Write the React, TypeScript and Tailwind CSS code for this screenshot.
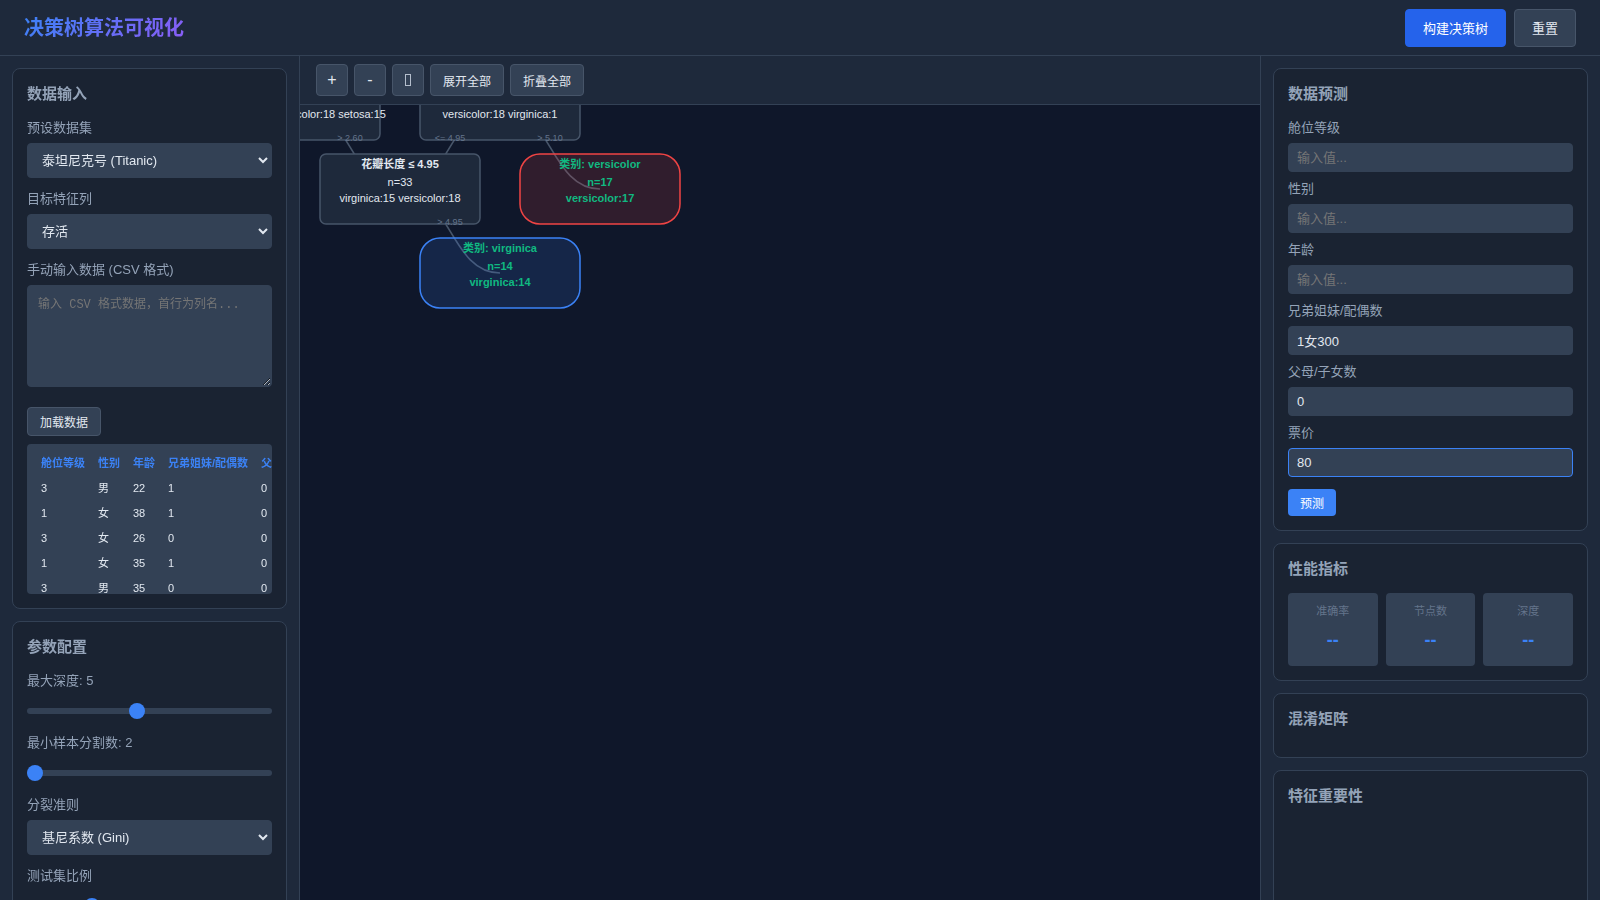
import { useState } from 'react'
import type { ReactNode } from 'react'

interface TreeNode {
  x: number
  y: number
  lines: string[]
  kind: 'split' | 'red' | 'blue'
}

interface TreeLink {
  from: [number, number]
  to: [number, number]
  label: string
}

const NODE_W = 160
const NODE_H = 70

// x / y are the centre of each node
const nodes: TreeNode[] = [
  { x: 0, y: 0, lines: ['', '', 'virginica:15 versicolor:18 setosa:15'], kind: 'split' },
  { x: 200, y: 0, lines: ['', '', 'versicolor:18 virginica:1'], kind: 'split' },
  { x: 100, y: 84, lines: ['花瓣长度 ≤ 4.95', 'n=33', 'virginica:15 versicolor:18'], kind: 'split' },
  { x: 300, y: 84, lines: ['类别: versicolor', 'n=17', 'versicolor:17'], kind: 'red' },
  { x: 200, y: 168, lines: ['类别: virginica', 'n=14', 'virginica:14'], kind: 'blue' },
]

const links: TreeLink[] = [
  { from: [0, 0], to: [100, 84], label: '> 2.60' },
  { from: [200, 0], to: [100, 84], label: '<= 4.95' },
  { from: [200, 0], to: [300, 84], label: '> 5.10' },
  { from: [100, 84], to: [200, 168], label: '> 4.95' },
]

const nodeClass = {
  split: 'fill-[#1e293b] stroke-[#475569]',
  red: 'fill-[#ef4444]/15 stroke-[#ef4444]',
  blue: 'fill-[#3b82f6]/15 stroke-[#3b82f6]',
}

const columns = ['舱位等级', '性别', '年龄', '兄弟姐妹/配偶数', '父母/子女数', '票价', '存活']

const rows = [
  ['3', '男', '22', '1', '0', '7.25', '否'],
  ['1', '女', '38', '1', '0', '71.28', '是'],
  ['3', '女', '26', '0', '0', '7.92', '是'],
  ['1', '女', '35', '1', '0', '53.1', '是'],
  ['3', '男', '35', '0', '0', '8.05', '否'],
]

const fields = [
  { id: 'pclass', label: '舱位等级', value: '' },
  { id: 'sex', label: '性别', value: '' },
  { id: 'age', label: '年龄', value: '' },
  { id: 'sibsp', label: '兄弟姐妹/配偶数', value: '1女300' },
  { id: 'parch', label: '父母/子女数', value: '0' },
  { id: 'fare', label: '票价', value: '80', active: true },
]

const metrics = ['准确率', '节点数', '深度']

const selectClass =
  'w-full h-[35px] px-2.5 rounded bg-[#334155] border border-[#334155] text-[13px] text-[#e2e8f0]'
const rangeClass =
  'block w-full h-1.5 mt-[17px] mb-2 appearance-none rounded-[3px] bg-[#334155] [&::-webkit-slider-thumb]:appearance-none [&::-webkit-slider-thumb]:size-4 [&::-webkit-slider-thumb]:rounded-full [&::-webkit-slider-thumb]:bg-[#3b82f6]'
const greyButton =
  'rounded bg-[#334155] border border-[#475569] leading-[normal] text-[#e2e8f0] hover:bg-[#475569]'

function Card({ title, children }: { title: string; children?: ReactNode }) {
  return (
    <section className="rounded-lg border border-[#334155] bg-[#1a2332] p-3.5">
      <h2 className="mb-3.5 text-[15px] leading-[21px] font-semibold text-[#94a3b8]">{title}</h2>
      {children}
    </section>
  )
}

function Label({ htmlFor, children }: { htmlFor: string; children: ReactNode }) {
  return (
    <label htmlFor={htmlFor} className="block text-[13px] leading-5 text-[#94a3b8]">
      {children}
    </label>
  )
}

function TreeCanvas() {
  return (
    <svg className="block w-full h-full" role="img" aria-label="决策树">
      {links.map(({ from, to }, i) => {
        const mid = (from[0] + to[0]) / 2
        return (
          <path
            key={i}
            d={`M${from[0]},${from[1]}C${mid},${from[1]} ${mid},${to[1]} ${to[0]},${to[1]}`}
            className="fill-none stroke-[#475569]"
            strokeWidth="1.5"
          />
        )
      })}
      {nodes.map((node, i) => (
        <g key={i} transform={`translate(${node.x},${node.y})`} textAnchor="middle">
          <rect
            x={-NODE_W / 2}
            y={-NODE_H / 2}
            width={NODE_W}
            height={NODE_H}
            rx={node.kind === 'split' ? 6 : 20}
            strokeWidth="1.5"
            className={nodeClass[node.kind]}
          />
          {node.lines.map((line, n) => (
            <text
              key={n}
              y={[-21, -3, 13][n]}
              className={
                node.kind !== 'split'
                  ? 'text-[11px] font-semibold fill-[#10b981]'
                  : n === 0
                    ? 'text-[11px] font-semibold fill-[#e2e8f0]'
                    : 'text-[11px] fill-[#e2e8f0]'
              }
            >
              {line}
            </text>
          ))}
        </g>
      ))}
      {links.map(({ from, to, label }, i) => (
        <text
          key={i}
          x={(from[0] + to[0]) / 2}
          y={(from[1] + to[1]) / 2 - 6}
          textAnchor="middle"
          className="text-[9px] fill-[#64748b]"
        >
          {label}
        </text>
      ))}
    </svg>
  )
}

export default function App() {
  const [depth, setDepth] = useState(5)
  const [minSplit, setMinSplit] = useState(2)

  return (
    <div className="flex h-screen flex-col overflow-hidden bg-[#0f172a] text-[#e2e8f0] font-['Liberation_Sans','Noto_Sans_CJK_SC',sans-serif]">
      {/* Header */}
      <header className="flex h-14 shrink-0 items-center justify-between border-b border-[#334155] bg-[#1e293b] px-6">
        <h1 className="bg-[linear-gradient(135deg,#3b82f6,#8b5cf6)] bg-clip-text text-xl leading-[30px] font-semibold text-transparent">
          决策树算法可视化
        </h1>
        <div className="flex gap-2">
          <button className="h-[38px] rounded border border-[#2563eb] bg-[#2563eb] px-[17px] text-[13px] leading-[normal] text-white">
            构建决策树
          </button>
          <button className={`h-[38px] px-[17px] text-[13px] ${greyButton}`}>重置</button>
        </div>
      </header>

      <div className="flex min-h-0 flex-1">
        {/* Left panel */}
        <aside className="w-[300px] shrink-0 space-y-3 overflow-y-auto border-r border-[#334155] bg-[#1e293b] p-3 [scrollbar-width:none]">
          <Card title="数据输入">
            <div className="flex flex-col gap-[11px]">
              <div className="flex flex-col gap-[5px]">
                <Label htmlFor="dataset">预设数据集</Label>
                <select id="dataset" className={selectClass}>
                  <option>泰坦尼克号 (Titanic)</option>
                  <option>鸢尾花 (Iris)</option>
                </select>
              </div>
              <div className="flex flex-col gap-[5px]">
                <Label htmlFor="target">目标特征列</Label>
                <select id="target" className={selectClass}>
                  <option>存活</option>
                </select>
              </div>
              <div className="flex flex-col gap-[5px]">
                <Label htmlFor="csv">手动输入数据 (CSV 格式)</Label>
                <textarea
                  id="csv"
                  placeholder="输入 CSV 格式数据，首行为列名..."
                  className="h-[102px] resize-y rounded border border-[#334155] bg-[#334155] px-2.5 py-2 font-['Liberation_Mono','Noto_Sans_CJK_SC',monospace] text-xs leading-[normal] placeholder:text-[#757575]"
                />
              </div>
            </div>
            <button className={`mt-5 h-[29px] px-3 text-xs ${greyButton}`}>加载数据</button>
            <div className="mt-2 h-[150px] overflow-auto rounded bg-[#334155] px-2 py-1.5 [scrollbar-width:none]">
              <table className="text-[11px] leading-4 whitespace-nowrap">
                <thead>
                  <tr>
                    {columns.map((col) => (
                      <th key={col} className="h-[25px] pr-[7px] pl-1.5 text-left font-bold text-[#3b82f6]">
                        {col}
                      </th>
                    ))}
                  </tr>
                </thead>
                <tbody>
                  {rows.map((row, i) => (
                    <tr key={i}>
                      {row.map((cell, j) => (
                        <td key={j} className="h-[25px] pr-[7px] pl-1.5">
                          {cell}
                        </td>
                      ))}
                    </tr>
                  ))}
                </tbody>
              </table>
            </div>
          </Card>

          <Card title="参数配置">
            <div className="flex flex-col gap-[11px]">
              <div>
                <Label htmlFor="depth">最大深度: {depth}</Label>
                <input
                  id="depth"
                  type="range"
                  min={1}
                  max={10}
                  value={depth}
                  onChange={(e) => setDepth(Number(e.target.value))}
                  className={rangeClass}
                />
              </div>
              <div>
                <Label htmlFor="min-split">最小样本分割数: {minSplit}</Label>
                <input
                  id="min-split"
                  type="range"
                  min={2}
                  max={20}
                  value={minSplit}
                  onChange={(e) => setMinSplit(Number(e.target.value))}
                  className={rangeClass}
                />
              </div>
              <div className="flex flex-col gap-[5px]">
                <Label htmlFor="criterion">分裂准则</Label>
                <select id="criterion" className={selectClass}>
                  <option>基尼系数 (Gini)</option>
                  <option>信息增益 (Entropy)</option>
                </select>
              </div>
              <div>
                <Label htmlFor="test-size">测试集比例</Label>
                <input
                  id="test-size"
                  type="range"
                  min={10}
                  max={50}
                  defaultValue={20}
                  className={rangeClass}
                />
              </div>
            </div>
          </Card>
        </aside>

        {/* Tree */}
        <main className="flex min-w-0 flex-1 flex-col">
          <div className="flex gap-1.5 border-b border-[#334155] bg-[#1e293b] px-4 py-2">
            <button className={`size-8 text-base ${greyButton}`}>+</button>
            <button className={`size-8 text-base ${greyButton}`}>-</button>
            <button aria-label="适应屏幕" className={`flex size-8 items-center justify-center ${greyButton}`}>
              <svg width="6" height="12" viewBox="0 0 6 12" className="fill-none stroke-[#b4becc]">
                <rect x="0.5" y="0.5" width="5" height="11" />
              </svg>
            </button>
            <button className={`h-8 px-3 text-xs ${greyButton}`}>展开全部</button>
            <button className={`h-8 px-3 text-xs ${greyButton}`}>折叠全部</button>
          </div>
          <div className="min-h-0 flex-1 overflow-hidden">
            <TreeCanvas />
          </div>
        </main>

        {/* Right panel */}
        <aside className="w-[340px] shrink-0 space-y-3 overflow-y-auto border-l border-[#334155] bg-[#1e293b] p-3 [scrollbar-width:none]">
          <Card title="数据预测">
            <div className="flex flex-col gap-[7px]">
              {fields.map((field) => (
                <div key={field.id} className="flex flex-col gap-[5px]">
                  <Label htmlFor={field.id}>{field.label}</Label>
                  <input
                    id={field.id}
                    type="text"
                    placeholder="输入值..."
                    defaultValue={field.value}
                    className={`h-[29px] w-full rounded border bg-[#334155] px-2 text-[13px] placeholder:text-[#757575] ${field.active ? 'border-[#3b82f6]' : 'border-[#334155]'}`}
                  />
                </div>
              ))}
            </div>
            <button className="mt-3 block h-[27px] rounded bg-[#3b82f6] px-3 text-xs leading-[normal] text-white">
              预测
            </button>
          </Card>

          <Card title="性能指标">
            <div className="grid grid-cols-3 gap-2">
              {metrics.map((name) => (
                <div key={name} className="rounded bg-[#334155] py-2.5 text-center">
                  <div className="mb-1.5 text-[11px] leading-4 text-[#64748b]">{name}</div>
                  <div className="text-lg leading-[31px] font-bold text-[#3b82f6]">--</div>
                </div>
              ))}
            </div>
          </Card>

          <Card title="混淆矩阵" />

          <Card title="特征重要性">
            <div className="h-[200px]" />
          </Card>
        </aside>
      </div>
    </div>
  )
}
